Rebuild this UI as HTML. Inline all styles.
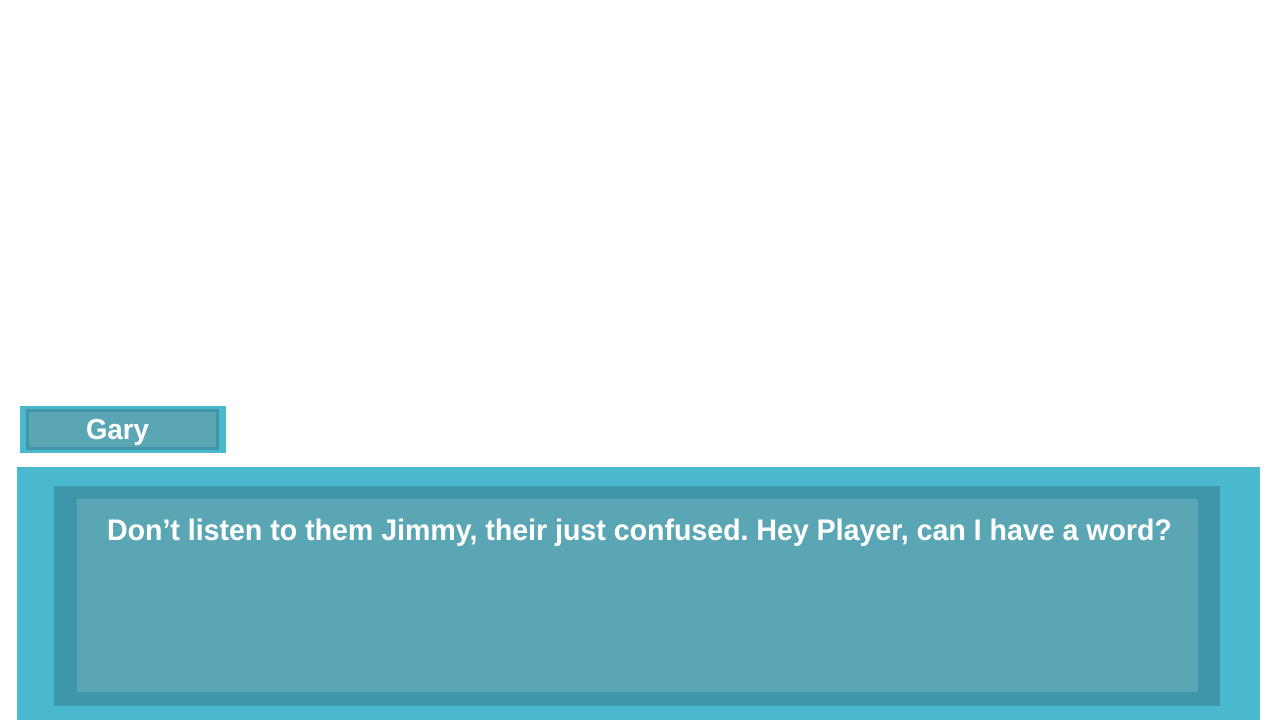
<!DOCTYPE html>
<html><head><meta charset="utf-8"><style>
body{margin:0;width:1280px;height:720px;background:#fff;position:relative;overflow:hidden;font-family:"Liberation Sans","Noto Sans CJK JP",sans-serif;font-weight:bold;color:#fff}
.a{position:absolute}
</style></head><body>
<div class="a" style="left:20px;top:406px;width:206px;height:47px;background:#4ab9cf"></div>
<div class="a" style="left:26px;top:409px;width:187px;height:35px;background:#5aa6b5;border:3px solid #3d97a8"></div>
<div class="a" style="left:86px;top:410px;height:41px;line-height:41px;font-size:29px;white-space:nowrap;transform-origin:0 0;transform:scaleX(0.95)">Gary</div>
<div class="a" style="left:107px;top:513px;font-size:30px;line-height:36px;white-space:nowrap;transform-origin:0 0;transform:scaleX(0.951)">Don’t listen to them Jimmy, their just confused. Hey Player, can I have a word?</div>
<div class="a" style="left:17px;top:467px;width:1243px;height:253px;background:#4ab9cf;z-index:-3"></div>
<div class="a" style="left:54px;top:486px;width:1166px;height:220px;background:#3d97a8;z-index:-2"></div>
<div class="a" style="left:77px;top:499px;width:1121px;height:193px;background:#5aa6b5;z-index:-1"></div>
</body></html>
